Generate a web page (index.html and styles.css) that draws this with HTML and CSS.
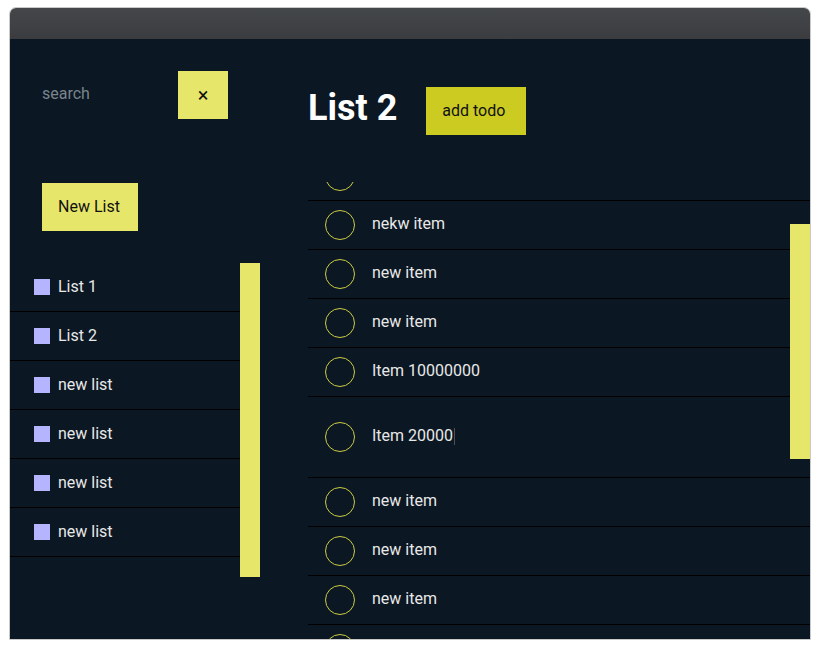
FILE: index.html
```html
<!DOCTYPE html>
<html lang="en">
  <head>
    <meta charset="UTF-8" />
    <meta name="viewport" content="width=device-width, initial-scale=1.0" />
    <title>todo</title>
    <link rel="stylesheet" href="styles.css">
  </head>
  <body>
    <div class="window">
      <div class="titlebar"></div>
      <div class="app">
        <aside class="sidebar">
          <div class="search">
            <input class="search-input" type="text" placeholder="search" />
            <div class="clear-btn btn">&times;</div>
          </div>
          <div class="new-list btn">New List</div>
          <div class="lists">
            <ul class="list-names">
              <li class="list-name"><span class="list-color"></span><span class="label">List 1</span></li>
              <li class="list-name"><span class="list-color"></span><span class="label">List 2</span></li>
              <li class="list-name"><span class="list-color"></span><span class="label">new list</span></li>
              <li class="list-name"><span class="list-color"></span><span class="label">new list</span></li>
              <li class="list-name"><span class="list-color"></span><span class="label">new list</span></li>
              <li class="list-name"><span class="list-color"></span><span class="label">new list</span></li>
            </ul>
            <div class="list-thumb"></div>
          </div>
        </aside>
        <main class="main">
          <div class="header">
            <h1 class="title">List 2</h1>
            <div class="add-btn btn">add todo</div>
          </div>
          <div class="todos">
            <ul class="todo-list">
              <li class="todo"><span class="check"></span><span class="text">new item</span></li>
              <li class="todo"><span class="check"></span><span class="text">nekw item</span></li>
              <li class="todo"><span class="check"></span><span class="text">new item</span></li>
              <li class="todo"><span class="check"></span><span class="text">new item</span></li>
              <li class="todo"><span class="check"></span><span class="text">Item 10000000</span></li>
              <li class="todo todo-edit"><span class="check"></span><span class="text">Item 20000</span><span class="caret"></span></li>
              <li class="todo"><span class="check"></span><span class="text">new item</span></li>
              <li class="todo"><span class="check"></span><span class="text">new item</span></li>
              <li class="todo"><span class="check"></span><span class="text">new item</span></li>
              <li class="todo"><span class="check"></span><span class="text">new item</span></li>
            </ul>
            <div class="todo-thumb"></div>
          </div>
        </main>
      </div>
    </div>
  </body>
</html>
```

FILE: styles.css
```css
body {
  margin: 0;
  background-color: #fff;
  font-family: Roboto, "Liberation Sans", sans-serif;
  font-size: 16px;
}

.window {
  width: 800px;
  margin: 7px 0 0 9px;
  border: 1px solid #c9c9c9;
  border-radius: 7px 7px 0 0;
  overflow: hidden;
}

.titlebar {
  height: 31px;
  background: linear-gradient(#44474a, #3b3c3f);
}

.app {
  display: grid;
  grid-template-columns: 298px 1fr;
  height: 600px;
  background-color: #0b1722;
  color: #e8e8e8;
}

.btn {
  height: 48px;
  line-height: 48px;
  text-align: center;
  color: #111;
  background-color: #e6e66a;
}

/* sidebar */
.sidebar {
  display: flex;
  flex-direction: column;
  align-items: flex-start;
  padding-top: 32px;
}

.search {
  display: flex;
  padding-left: 32px;
}

.search-input {
  width: 136px;
  height: 44px;
  padding: 0;
  border: none;
  outline: none;
  background: transparent;
  color: #e8e8e8;
  font-family: inherit;
  font-size: 16px;
}
.search-input::placeholder {
  color: #7a848d;
}

.clear-btn {
  width: 50px;
  font-size: 20px;
}

.new-list {
  margin: 64px 0 0 32px;
  padding: 0 18px 0 16px;
}

.lists {
  display: flex;
  margin-top: 32px;
}

.list-names {
  width: 230px;
  margin: 0;
  padding: 0;
  list-style: none;
}

.list-name {
  display: flex;
  align-items: center;
  gap: 8px;
  height: 48px;
  padding-left: 24px;
  border-bottom: 1px solid #000;
}
.list-name .label {
  margin-bottom: 2px;
}

.list-color {
  width: 16px;
  height: 16px;
  background-color: #b4b4ff;
}

.list-thumb {
  width: 20px;
  height: 314px;
  background-color: #e6e66a;
}

/* main */
.main {
  padding-top: 48px;
}

.header {
  display: flex;
  align-items: flex-start;
  gap: 29px;
}

.title {
  margin: 0;
  line-height: 42px;
  font-size: 36px;
  font-weight: 700;
  color: #fff;
}

.add-btn {
  width: 84px;
  padding-left: 16px;
  text-align: left;
  background-color: #cbcb22;
}

.todos {
  position: relative;
  height: 457px;
  margin-top: 47px;
  overflow: hidden;
}

.todo-list {
  margin: -30px 0 0;
  padding: 0;
  list-style: none;
}

.todo {
  display: flex;
  align-items: center;
  gap: 17px;
  height: 48px;
  padding-left: 17px;
  border-bottom: 1px solid #000;
}
.todo .text {
  margin-bottom: 3px;
}
.todo-edit {
  height: 80px;
}

.check {
  width: 28px;
  height: 28px;
  border: 1px solid #cccc44;
  border-radius: 50%;
}

.caret {
  width: 1px;
  height: 17px;
  margin: 0 0 2px -16px;
  background-color: #4a5258;
}

.todo-thumb {
  position: absolute;
  top: 42px;
  right: 0;
  width: 20px;
  height: 235px;
  background-color: #e6e66a;
}
```
